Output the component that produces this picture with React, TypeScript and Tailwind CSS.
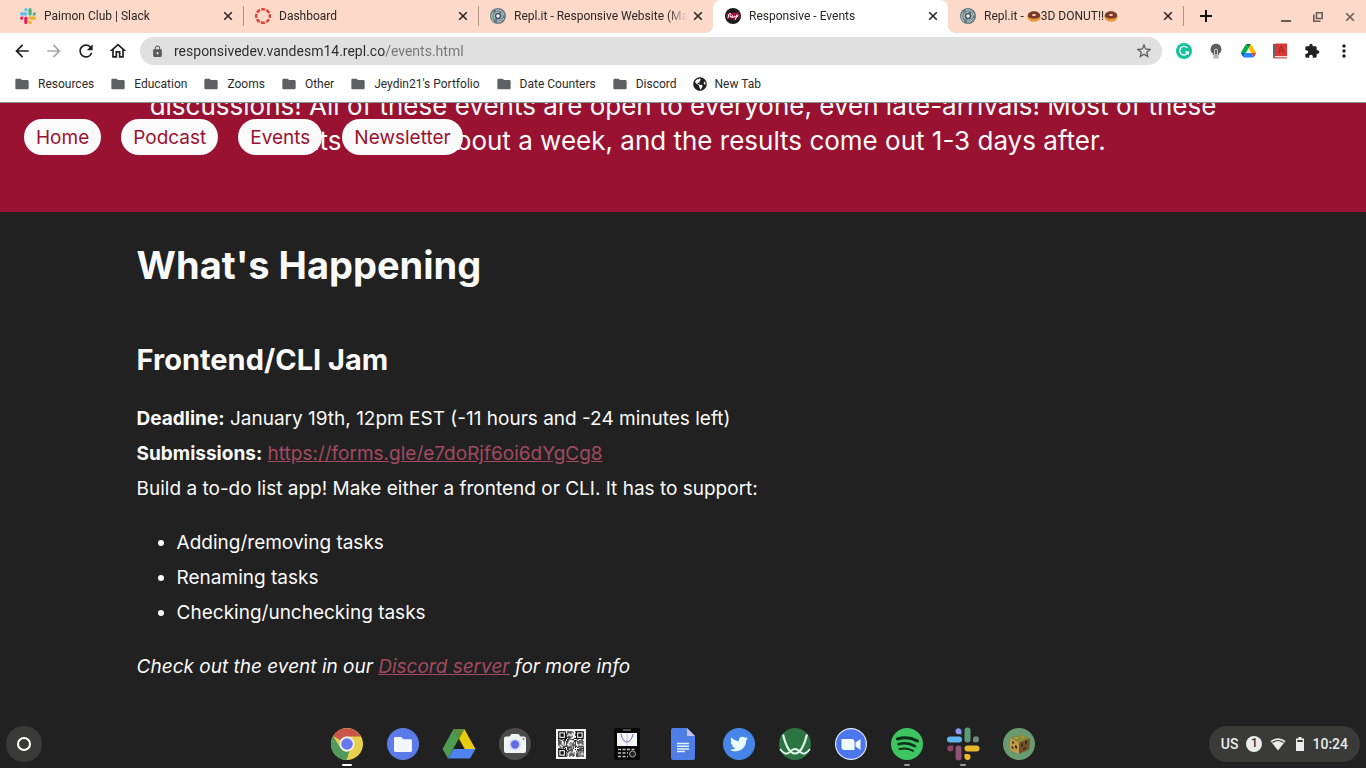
import type { ReactNode } from "react";
import {
  MdArrowBack,
  MdArrowForward,
  MdRefresh,
  MdOutlineHome,
  MdLock,
  MdFolder,
  MdStarBorder,
  MdExtension,
  MdMoreVert,
} from "react-icons/md";
import { FaGlobeAmericas, FaTwitter } from "react-icons/fa";

function SlackIcon({ className }: { className?: string }) {
  return (
    <svg viewBox="0 0 54 54" className={className} aria-hidden="true">
      <path fill="#5ac0ee" d="M19.7.1a5.4 5.4 0 0 0 0 10.8h5.4V5.5A5.4 5.4 0 0 0 19.7.1m0 14.4H5.3a5.4 5.4 0 0 0 0 10.8h14.4a5.4 5.4 0 0 0 0-10.8" />
      <path fill="#41b883" d="M53.8 19.9a5.4 5.4 0 0 0-10.8 0v5.4h5.4a5.4 5.4 0 0 0 5.4-5.4m-14.4 0V5.5a5.4 5.4 0 0 0-10.8 0v14.4a5.4 5.4 0 0 0 10.8 0" />
      <path fill="#ecb22e" d="M34 54a5.4 5.4 0 0 0 0-10.8h-5.4v5.4A5.4 5.4 0 0 0 34 54m0-14.4h14.4a5.4 5.4 0 0 0 0-10.8H34a5.4 5.4 0 0 0 0 10.8" />
      <path fill="#e01e5a" d="M0 34.2a5.4 5.4 0 0 0 10.8 0v-5.4H5.4A5.4 5.4 0 0 0 0 34.2m14.4 0v14.4a5.4 5.4 0 0 0 10.8 0V34.2a5.4 5.4 0 0 0-10.8 0" />
    </svg>
  );
}

function ShelfSlackIcon() {
  return (
    <svg viewBox="0 0 34 34" className="size-[34px]" aria-hidden="true">
      <rect x="1" y="9.5" width="15" height="6" rx="3" fill="#60b4f0" />
      <path fill="#8c98f0" d="M15.5 7.2V3.8a3 3 0 1 0-3 3.4z" />
      <rect x="18.5" y="0.5" width="6" height="15" rx="3" fill="#5a9c74" />
      <path fill="#6c8c78" d="M27 15.3v-3.2a3 3 0 1 1 3.2 3.2z" />
      <rect x="18.5" y="18.5" width="15" height="6" rx="3" fill="#e8b82c" />
      <path fill="#f0b82c" d="M18.5 27h3.2a3 3 0 1 1-3.2 3.2z" />
      <rect x="9.5" y="18.5" width="6" height="15" rx="3" fill="#8c5474" />
      <path fill="#8c4468" d="M7.3 18.5v3.2a3 3 0 1 1-3.2-3.2z" />
    </svg>
  );
}

function CanvasIcon() {
  return (
    <svg viewBox="0 0 16 16" className="size-4" aria-hidden="true">
      <circle cx="8" cy="8" r="6.8" fill="none" stroke="#e0403a" strokeWidth="2.4" strokeDasharray="4 1.34" strokeDashoffset="2" />
    </svg>
  );
}

function ReplIcon() {
  return (
    <svg viewBox="0 0 16 16" className="size-4" aria-hidden="true">
      <circle cx="8" cy="8" r="8" fill="#647a82" />
      <g fill="none" stroke="#c8d4d6" strokeWidth="1" strokeLinecap="round">
        <path d="M3.5 13A6.5 6.5 0 0 1 3 4.500" />
        <path d="M6 2a6.300 6.300 0 0 1 8 5" />
        <path d="M13.500 10.500a6.300 6.300 0 0 1-6 3.500" />
        <path d="M5 11A4.300 4.300 0 0 1 8.500 3.900" />
        <path d="M11.500 5.500a4.300 4.300 0 0 1-4 6.700" />
      </g>
      <circle cx="8" cy="8" r="3" fill="#3f4f5c" />
      <circle cx="8" cy="8" r="1.8" fill="#f2f5f5" />
    </svg>
  );
}

function ResponsiveIcon() {
  return (
    <svg viewBox="0 0 16 16" className="size-4" aria-hidden="true">
      <circle cx="8" cy="8" r="8" fill="#1c1c1e" />
      <path fill="#a80f3a" d="M1.500 5.500 14 4.500l.8 5-4 .6-2 2.400-1.600-2-5.200.3z" />
      <path fill="none" stroke="#fff" strokeLinecap="round" strokeLinejoin="round" d="M3 9.800l1-4c2-1 3 1 .8 2l1.500 1.700C8.800 8.500 7.500 6.500 6.700 8.500c.6 1.400 1.800 1 2.500 0 .6-1.200 1.600-.4.7.7M10.600 11.500l1-4.500c2-.6 1.600 2.200-.3 2" />
    </svg>
  );
}

function DonutIcon() {
  return (
    <svg viewBox="0 0 14 14" className="size-3.5 shrink-0" role="img" aria-label="doughnut">
      <ellipse cx="7" cy="8" rx="6.500" ry="4.800" fill="#e8963c" />
      <path fill="#7a3a28" d="M.7 6.800C1 3.800 3.500 2.300 7 2.300s6 1.500 6.300 4.500c-.3 2-1.500 1.200-2.300 2.200-1 .9-2 .1-4 .6-2.200.4-3-.6-4-.8C1.800 8.500.8 8.500.7 6.800" />
      <ellipse cx="7" cy="6" rx="2" ry="1" fill="#fcd5c0" />
    </svg>
  );
}

function DriveIcon() {
  return (
    <svg viewBox="0 0 87.3 78" className="w-[15px]" aria-hidden="true">
      <path fill="#0066da" d="m6.600 66.850 3.850 6.650c.8 1.400 1.950 2.500 3.300 3.300L27.500 53H0c0 1.550.4 3.100 1.200 4.500z" />
      <path fill="#00ac47" d="M43.650 25 29.900 1.200c-1.350.8-2.500 1.900-3.300 3.300l-25.400 44A9.060 9.060 0 0 0 0 53h27.500z" />
      <path fill="#ea4335" d="M73.550 76.800c1.350-.8 2.500-1.900 3.300-3.300l1.600-2.750 7.650-13.250c.8-1.400 1.200-2.950 1.200-4.500H59.800l5.850 11.500z" />
      <path fill="#00832d" d="M43.650 25 57.400 1.200C56.050.4 54.500 0 52.900 0H34.400c-1.600 0-3.150.45-4.500 1.200z" />
      <path fill="#2684fc" d="M59.800 53H27.500L13.750 76.800c1.350.8 2.900 1.200 4.500 1.200h50.800c1.600 0 3.150-.45 4.500-1.200z" />
      <path fill="#ffba00" d="m73.400 26.500-12.700-22c-.8-1.400-1.950-2.500-3.300-3.300L43.650 25 59.800 53h27.450c0-1.550-.4-3.100-1.200-4.500z" />
    </svg>
  );
}

function GrammarlyIcon() {
  return (
    <svg viewBox="0 0 16 16" className="size-4" aria-hidden="true">
      <circle cx="8" cy="8" r="8" fill="#15c39a" />
      <path fill="none" stroke="#fff" strokeWidth="1.400" d="M11.300 4.900A4.300 4.300 0 1 0 12.100 9H9.300m2.800-.2v2.700" />
    </svg>
  );
}

function BulbIcon() {
  return (
    <svg viewBox="0 0 16 16" className="size-4" aria-hidden="true">
      <path fill="#5c5c5c" d="M8 .8a5.400 5.400 0 0 1 3 9.900V12H5v-1.300A5.400 5.400 0 0 1 8 .8" />
      <path fill="#b4b4b4" d="M5.500 11h5v4.500h-5z" />
      <path fill="none" stroke="#d6d6d6" d="M6.500 11V7.500a1.500 1.500 0 0 1 3 0V11" />
    </svg>
  );
}

function BookIcon() {
  return (
    <svg viewBox="0 0 14 16" className="h-4 w-3.5" aria-hidden="true">
      <path fill="#646464" d="M0 1h3v14H0z" />
      <path fill="#d93a35" d="M2.500.5H14v12.700H2.500z" />
      <path fill="#eee5dc" d="M1.500 13.200H14v1.500H1.500z" />
      <path fill="#c22f2b" d="M1 14.400h13v1H1z" />
      <path fill="none" stroke="#b02a26" strokeWidth="1.200" d="m5.500 10 2.800-7 2.700 7M6.500 8h3.700" />
    </svg>
  );
}

function CloseIcon() {
  return (
    <svg viewBox="0 0 10 10" className="size-2.5" aria-hidden="true">
      <path fill="none" stroke="currentColor" strokeWidth="1.600" d="m1.200 1.200 7.600 7.600m0-7.600L1.200 8.800" />
    </svg>
  );
}

interface TabProps {
  icon: ReactNode;
  title: ReactNode;
  active?: boolean;
  divider?: boolean;
}

function Tab({ icon, title, active, divider }: TabProps) {
  return (
    <div
      className={
        active
          ? "relative flex h-full max-w-[235px] min-w-0 flex-1 items-center rounded-t-lg bg-white pr-[10px] pb-0.5 pl-3"
          : "relative flex h-full max-w-[235px] min-w-0 flex-1 items-center pr-[10px] pb-0.5 pl-3"
      }
    >
      {active && (
        <>
          <span className="absolute bottom-0 -left-2 size-2 bg-[radial-gradient(circle_at_0_0,#fcd9c8_8px,#fff_8px)]" />
          <span className="absolute -right-2 bottom-0 size-2 bg-[radial-gradient(circle_at_100%_0,#fcd9c8_8px,#fff_8px)]" />
        </>
      )}
      <span className="shrink-0">{icon}</span>
      <span className="ml-2 flex min-w-0 flex-1 items-center overflow-hidden [mask-image:linear-gradient(to_right,#000_calc(100%-20px),transparent)] whitespace-nowrap">
        {title}
      </span>
      <button type="button" aria-label="Close tab" className="ml-1.5 shrink-0">
        <CloseIcon />
      </button>
      {divider && <span className="absolute top-1.5 -right-px h-5 w-px bg-[#b09488]" />}
    </div>
  );
}

function TabStrip() {
  return (
    <div className="flex h-[33px] items-center bg-[#fcd9c8] pl-2 text-[12px] text-[#2c2624]">
      <Tab icon={<SlackIcon className="size-4" />} title="Paimon Club | Slack" divider />
      <Tab icon={<CanvasIcon />} title="Dashboard" divider />
      <Tab icon={<ReplIcon />} title="Repl.it - Responsive Website (Ma" />
      <Tab icon={<ResponsiveIcon />} title="Responsive - Events" active />
      <Tab
        icon={<ReplIcon />}
        title={
          <>
            Repl.it -&nbsp;
            <DonutIcon />
            3D DONUT!!
            <DonutIcon />
          </>
        }
        divider
      />
      <button type="button" aria-label="New tab" className="ml-[17px] pb-0.5">
        <svg viewBox="0 0 12 12" className="size-3" aria-hidden="true">
          <path stroke="#111" strokeWidth="2" d="M6 0v12M0 6h12" />
        </svg>
      </button>
      <div className="ml-auto flex items-center gap-[22px] pr-[11px] text-[#6a5b54]">
        <button type="button" aria-label="Minimize">
          <svg viewBox="0 0 10 10" className="size-2.5" aria-hidden="true">
            <path stroke="currentColor" strokeWidth="2" d="M0 9h10" />
          </svg>
        </button>
        <button type="button" aria-label="Restore">
          <svg viewBox="0 0 10 10" className="size-2.5" aria-hidden="true">
            <path fill="none" stroke="currentColor" strokeWidth="1.600" d="M3.500.8h5.700v5.700H3.500zM.8 2.500v6.700h6.700" />
          </svg>
        </button>
        <button type="button" aria-label="Close window">
          <CloseIcon />
        </button>
      </div>
    </div>
  );
}

const extensions = [
  { name: "Grammarly", icon: <GrammarlyIcon /> },
  { name: "Lightbulb", icon: <BulbIcon /> },
  { name: "Drive", icon: <DriveIcon /> },
  { name: "Dictionary", icon: <BookIcon /> },
  { name: "Extensions", icon: <MdExtension size={16} /> },
  { name: "Menu", icon: <MdMoreVert size={20} className="shrink-0" /> },
];

function Toolbar() {
  return (
    <div className="flex h-9 items-center bg-white pr-[14px] pl-3 text-[#1f1f1f]">
      <div className="flex items-center gap-3">
        <button type="button" aria-label="Back"><MdArrowBack size={20} /></button>
        <button type="button" aria-label="Forward" className="text-[#a8a8a8]"><MdArrowForward size={20} /></button>
        <button type="button" aria-label="Reload"><MdRefresh size={20} /></button>
        <button type="button" aria-label="Home"><MdOutlineHome size={20} /></button>
      </div>
      <div className="ml-3 flex h-7 min-w-0 flex-1 items-center rounded-full bg-[#e0e0e0] pr-[9px] pl-[11px] text-sm">
        <MdLock size={13} className="shrink-0 text-[#5b5b5b]" />
        <input
          type="text"
          aria-label="Address"
          defaultValue="responsivedev.vandesm14.repl.co/events.html"
          className="ml-[10px] min-w-0 flex-1 bg-[linear-gradient(to_right,#2b2b2b_212px,#757575_212px)] bg-clip-text text-transparent outline-none"
        />
        <button type="button" aria-label="Bookmark this page" className="text-[#555]">
          <MdStarBorder size={18} />
        </button>
      </div>
      <div className="ml-[14px] flex items-center gap-4">
        {extensions.map((ext) => (
          <button key={ext.name} type="button" aria-label={ext.name} className="flex w-4 justify-center">
            {ext.icon}
          </button>
        ))}
      </div>
    </div>
  );
}

const folders = ["Resources", "Education", "Zooms", "Other", "Jeydin21's Portfolio", "Date Counters", "Discord"];

function Bookmarks() {
  return (
    <div className="flex h-[34px] items-center gap-4 border-b border-[#8c9490] bg-white px-[14px] pb-1 text-[12px] text-[#2b2b2b]">
      {folders.map((name) => (
        <a key={name} href="#" className="flex items-center gap-2">
          <MdFolder size={16} className="text-[#5f6063]" />
          {name}
        </a>
      ))}
      <a href="#" className="flex items-center gap-2">
        <FaGlobeAmericas size={14} className="text-[#1f1f1f]" />
        New Tab
      </a>
    </div>
  );
}

const links = ["Home", "Podcast", "Events", "Newsletter"];

function Hero() {
  return (
    <header className="relative flex h-[109px] flex-col justify-end overflow-hidden bg-[#991232] px-[10%] pb-[54px]">
      <p className="text-center text-[26px] leading-[35px] text-[#fafafa]">
        discussions! All of these events are open to everyone, even late-arrivals! Most of these
        events last for about a week, and the results come out 1-3 days after.
      </p>
      <nav className="absolute top-4 left-6 flex gap-5">
        {links.map((link) => (
          <a
            key={link}
            href="#"
            className="flex h-9 items-center rounded-full bg-[#fafafa] px-3 pt-0.5 text-[19px] text-[#991232]"
          >
            {link}
          </a>
        ))}
      </nav>
    </header>
  );
}

function Content() {
  return (
    <main className="flex-1 px-[10%] pt-[29px] text-[19px] leading-[35px] text-[#fafafa]">
      <h1 className="text-[38px] leading-[48px] font-bold">What's Happening</h1>
      <section className="pt-[52px]">
        <h2 className="text-[29px] leading-[38px] font-bold">Frontend/CLI Jam</h2>
        <div className="pt-[22px]">
          <p>
            <strong className="font-bold">Deadline:</strong> January 19th, 12pm EST (-11 hours and -24 minutes left)
          </p>
          <p>
            <strong className="font-bold">Submissions:</strong>{" "}
            <a href="#" className="text-[#a24a60] underline">https://forms.gle/e7doRjf6oi6dYgCg8</a>
          </p>
          <p>Build a to-do list app! Make either a frontend or CLI. It has to support:</p>
        </div>
        <ul className="list-disc py-[19px] pl-10">
          <li>Adding/removing tasks</li>
          <li>Renaming tasks</li>
          <li>Checking/unchecking tasks</li>
        </ul>
        <p className="italic">
          Check out the event in our <a href="#" className="text-[#a24a60] underline">Discord server</a> for more info
        </p>
      </section>
    </main>
  );
}

function ChromeIcon() {
  return (
    <svg viewBox="0 0 32 32" className="size-8" aria-hidden="true">
      <circle cx="16" cy="16" r="16" fill="#e8cf4e" />
      <path fill="#c8574a" d="M2.100 8A16 16 0 0 1 29.900 8.500H16a7.500 7.500 0 0 0-6.500 3.700z" />
      <path fill="#4f9a5c" d="M2.100 8l7.400 12a7.500 7.500 0 0 0 9 3L15.500 32A16 16 0 0 1 2.100 8" />
      <circle cx="16" cy="16" r="7.500" fill="#f1f1f6" />
      <circle cx="16" cy="16" r="5.800" fill="#6a78ee" />
    </svg>
  );
}

function FilesIcon() {
  return (
    <svg viewBox="0 0 32 32" className="size-8" aria-hidden="true">
      <circle cx="16" cy="16" r="16" fill="#5b7ce8" />
      <path fill="#f2f6fb" d="M8.500 9h5.800l2 2.200h7.200c1 0 1.500.6 1.500 1.500v9.800c0 .9-.6 1.500-1.500 1.500h-15c-.9 0-1.500-.6-1.500-1.500v-12C7 9.600 7.600 9 8.500 9" />
    </svg>
  );
}

function ShelfDriveIcon() {
  return (
    <svg viewBox="0 0 34 30" className="w-[34px]" aria-hidden="true">
      <path fill="#4e9a50" d="M11.500 0 17 9.500 6 29.500.5 20z" />
      <path fill="#5f8f3c" d="M11.500 0h10.800L17 10z" />
      <path fill="#e8cc10" d="M22.300 0l11.200 20H22.500L17 10z" />
      <path fill="#4e84f0" d="M11.500 20h22L28 29.500H6z" />
      <path fill="#222" d="m17 10 5.500 10h-11z" />
    </svg>
  );
}

function CameraIcon() {
  return (
    <svg viewBox="0 0 32 32" className="size-8" aria-hidden="true">
      <circle cx="16" cy="16" r="16" fill="#4b4b4b" />
      <path fill="#f0f4f4" d="M7 8.500h3.500L12.500 6h7l2 2.500H25a2 2 0 0 1 2 2V23a2 2 0 0 1-2 2H7a2 2 0 0 1-2-2V10.500a2 2 0 0 1 2-2" />
      <circle cx="16" cy="16.500" r="6" fill="#dcdff2" />
      <circle cx="16" cy="16.500" r="4.200" fill="#656de6" />
      <circle cx="24.500" cy="11" r="1" fill="#4e8a68" />
    </svg>
  );
}

// Data modules only need to look random, the three finders sit on top
const modules = Array.from({ length: 23 * 23 }, (_, i) => i).filter(
  (i) => ((Math.imul(i + 1, 2654435761) >>> 13) ^ (i * 29)) % 7 < 4,
);

function QrIcon() {
  return (
    <svg viewBox="-2 -2 27 27" className="size-[30px]" aria-hidden="true">
      <path fill="#f6f6f6" d="M-2-2h27v27H-2z" />
      {modules.map((i) => (
        <rect key={i} x={i % 23} y={Math.floor(i / 23)} width="1" height="1" fill="#111" />
      ))}
      {["translate(0 0)", "translate(16 0)", "translate(0 16)"].map((t) => (
        <g key={t} transform={t}>
          <path fill="#111" d="M0 0h7v7H0z" />
          <path fill="#f6f6f6" d="M1 1h5v5H1z" />
          <path fill="#111" d="M2 2h3v3H2z" />
        </g>
      ))}
    </svg>
  );
}

function CalculatorIcon() {
  return (
    <svg viewBox="0 0 26 32" className="h-8 w-[26px]" aria-hidden="true">
      <rect width="26" height="32" rx="2" fill="#070707" />
      <path stroke="#999" d="M9 2h8" />
      <path fill="#f5f5fa" d="M3 5h20v13H3z" />
      <path stroke="#9a9aaa" strokeWidth=".5" d="M13 5v13" />
      <path fill="none" stroke="#5a62ae" strokeWidth="1" d="M7 6c1 5 3.500 8 6 8s5-3 6-8" />
      <path stroke="#c4c4c4" strokeWidth="1.500" strokeDasharray="3 1.500" d="M4 21.500h18M4 25h10M4 28.500h10" />
      <circle cx="18.500" cy="26" r="3" fill="#222" stroke="#aaa" />
    </svg>
  );
}

function DocsIcon() {
  return (
    <svg viewBox="0 0 24 32" className="h-8 w-6" aria-hidden="true">
      <path fill="#4f7ee6" d="M2 0h14l8 8v22a2 2 0 0 1-2 2H2a2 2 0 0 1-2-2V2C0 .9.900 0 2 0" />
      <path fill="#c6c2ee" d="m16 0 8 8h-8z" />
      <path stroke="#e4f2fb" strokeWidth="1.500" d="M6 15.500h12M6 18.200h12M6 20.900h12M6 23.600h8" />
    </svg>
  );
}

function TwitterIcon() {
  return (
    <span className="flex size-8 items-center justify-center rounded-full bg-[#4586e8] text-[#e8fafc]">
      <FaTwitter size={18} />
    </span>
  );
}

function DesmosIcon() {
  return (
    <svg viewBox="0 0 32 32" className="size-8" aria-hidden="true">
      <circle cx="16" cy="16" r="16" fill="#2d7442" />
      <path fill="none" stroke="#e4faee" strokeWidth="2.200" d="M4 6.500c3 12 6.500 19 12 19S25 18 28 6.500" />
      <path fill="none" stroke="#e4faee" strokeWidth="1.800" d="M1 21c3 4 6 6 9 3.500 2.500-2.200 3.500-3.500 6-3.500s3.500 1.500 6 3.500c3 2.500 6 .5 9-3.500" />
    </svg>
  );
}

function ZoomIcon() {
  return (
    <svg viewBox="0 0 32 32" className="size-8" aria-hidden="true">
      <circle cx="16" cy="16" r="16" fill="#dfe5fb" />
      <circle cx="16" cy="16" r="14.800" fill="#4b76ec" />
      <path fill="#eefafd" d="M6.500 11h10a3 3 0 0 1 3 3v8h-10a3 3 0 0 1-3-3zM20.500 14.500l5-3.500v11l-5-3.500z" />
    </svg>
  );
}

function SpotifyIcon() {
  return (
    <svg viewBox="0 0 32 32" className="size-8" aria-hidden="true">
      <circle cx="16" cy="16" r="16" fill="#3cc561" />
      <g fill="none" stroke="#0c2d1a" strokeLinecap="round">
        <path strokeWidth="3" d="M6.500 11c6.500-2 14-1.300 20 2" />
        <path strokeWidth="2.500" d="M7.500 16.200c5.500-1.500 11.500-.9 16.500 2" />
        <path strokeWidth="2" d="M8.500 21c4.500-1 9.500-.6 13.500 1.800" />
      </g>
    </svg>
  );
}

function BlockIcon() {
  return (
    <svg viewBox="0 0 32 32" className="size-8" aria-hidden="true">
      <circle cx="16" cy="16" r="16" fill="#6a9a70" />
      <path fill="#8c8a34" d="m7 10 11-3.500 9 4-11 4z" />
      <path fill="#c29a4e" d="m7 10 9 4.500v11.500l-9-4z" />
      <path fill="#76522c" d="m16 14.500 11-4-.8 11L16 26z" />
      <path fill="#3a3218" d="M9 13l2 1v2l-2-1zM12 17l2 1v3l-2-1zM8.500 18l2 1v2l-2-1zM18 16l2-1v3l-2 1zM22 13l2-1v4l-2 1zM20 20l3-1v2l-3 1z" />
      <path fill="#b6a440" d="m11 10 3-1 2 1-3 1zM18 9l2-.6 2 1-2 .6zM16 12l2-.6 1 .6-2 .6z" />
    </svg>
  );
}

interface ShelfApp {
  name: string;
  icon: ReactNode;
  mark?: "active" | "open";
}

const apps: ShelfApp[] = [
  { name: "Chrome", icon: <ChromeIcon />, mark: "active" },
  { name: "Files", icon: <FilesIcon /> },
  { name: "Google Drive", icon: <ShelfDriveIcon /> },
  { name: "Camera", icon: <CameraIcon /> },
  { name: "QR code", icon: <QrIcon /> },
  { name: "Calculator", icon: <CalculatorIcon /> },
  { name: "Docs", icon: <DocsIcon /> },
  { name: "Twitter", icon: <TwitterIcon /> },
  { name: "Desmos", icon: <DesmosIcon /> },
  { name: "Zoom", icon: <ZoomIcon /> },
  { name: "Spotify", icon: <SpotifyIcon />, mark: "open" },
  { name: "Slack", icon: <ShelfSlackIcon />, mark: "open" },
  { name: "Minecraft", icon: <BlockIcon /> },
];

function Shelf() {
  return (
    <footer className="grid h-12 grid-cols-[1fr_auto_1fr] items-center px-1.5">
      <button
        type="button"
        aria-label="Launcher"
        className="flex size-9 items-center justify-center rounded-full bg-[#3a3a39]"
      >
        <span className="size-3.5 rounded-full border-2 border-white" />
      </button>
      <div className="flex">
        {apps.map((app) => (
          <button
            key={app.name}
            type="button"
            aria-label={app.name}
            className="relative flex h-12 w-14 items-center justify-center"
          >
            {app.icon}
            {app.mark === "active" && <span className="absolute bottom-0.5 h-0.5 w-2.5 rounded-full bg-white" />}
            {app.mark === "open" && <span className="absolute bottom-0.5 h-0.5 w-1.5 rounded-full bg-[#9a9a9a]" />}
          </button>
        ))}
      </div>
      <button
        type="button"
        className="flex h-9 items-center justify-self-end rounded-full bg-[#3a3a39] px-3 text-sm font-medium text-[#ececec]"
      >
        US
        <span className="ml-2 flex size-4 items-center justify-center rounded-full bg-[#ececec] text-[12px] text-[#333]">
          1
        </span>
        <svg viewBox="0 0 16 14" className="ml-2 w-4" aria-hidden="true">
          <path fill="#ececec" d="M8 13.500.5 4a12 12 0 0 1 15 0z" />
          <path fill="none" stroke="#3a3a39" strokeWidth="1.200" d="M2.500 5.500a8.500 8.500 0 0 1 11 0" />
        </svg>
        <svg viewBox="0 0 8 14" className="ml-2.5 h-3.5 w-2" aria-hidden="true">
          <path fill="#ececec" d="M2.500 0h3v1.500H8V14H0V1.500h2.500z" />
          <path fill="#3a3a39" d="M1.300 3h5.400v2H1.300z" />
        </svg>
        <span className="ml-2">10:24</span>
      </button>
    </footer>
  );
}

export default function App() {
  return (
    <div className="flex min-h-screen flex-col bg-[#212121] font-['Inter',sans-serif]">
      <div className="font-['Roboto',sans-serif]">
        <TabStrip />
        <Toolbar />
        <Bookmarks />
      </div>
      <Hero />
      <Content />
      <div className="font-['Roboto',sans-serif]">
        <Shelf />
      </div>
    </div>
  );
}
